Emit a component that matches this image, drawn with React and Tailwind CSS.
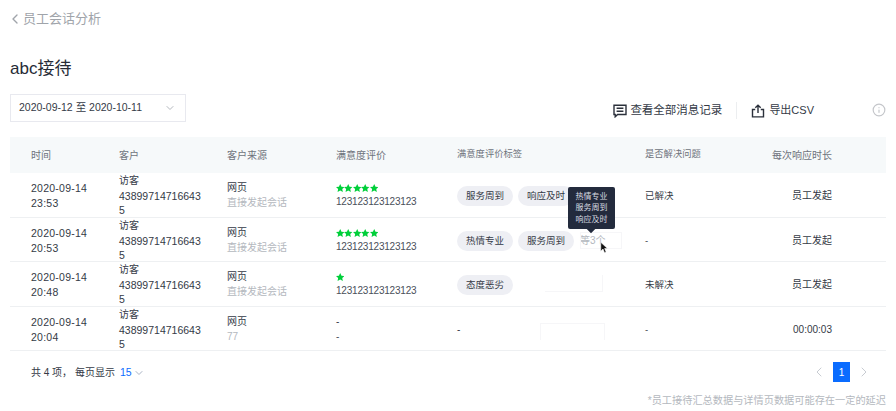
import React from "react";
import { ChevronLeft, ChevronRight, ChevronDown, Info } from "lucide-react";

const cols = "grid grid-cols-[88px_108px_109px_121px_188px_187px_53px] pl-[21px]";

const rows = [
  { date: "2020-09-14", time: "23:53", sub: "直接发起会话", stars: 5, note: "123123123123123", tags: ["服务周到", "响应及时"], solved: "已解决", resp: "员工发起", h: "h-[45px]" },
  { date: "2020-09-14", time: "20:53", sub: "直接发起会话", stars: 5, note: "123123123123123", tags: ["热情专业", "服务周到"], more: true, solved: "-", resp: "员工发起", h: "h-[44px]" },
  { date: "2020-09-14", time: "20:48", sub: "直接发起会话", stars: 1, note: "123123123123123", tags: ["态度恶劣"], solved: "未解决", resp: "员工发起", h: "h-[45px]" },
  { date: "2020-09-14", time: "20:04", sub: "77", stars: 0, note: "-", tags: [], solved: "-", resp: "00:00:03", h: "h-[44px]" },
];

function Star() {
  return (
    <svg viewBox="0 0 24 24" className="w-[8.4px] h-[8.4px] fill-[#00cf3a]">
      <path d="M12 0l3.7 7.6 8.3 1.1-6.1 5.8 1.6 8.3-7.5-4-7.5 4 1.6-8.3L0 8.7l8.3-1.1z" />
    </svg>
  );
}

function Row({ r }) {
  return (
    <div className={`${cols} ${r.h} pt-[1px] items-center border-b border-[#eef0f2] text-[10px] leading-[14.5px] text-[#343a46]`}>
      <div className="text-[10.5px] tracking-[0.25px] leading-[15px]">
        <div>{r.date}</div>
        <div>{r.time}</div>
      </div>
      <div>
        <div>访客</div>
        <div className="text-[10.5px]">43899714716643</div>
        <div className="text-[10.5px]">5</div>
      </div>
      <div>
        <div>网页</div>
        <div className="text-[#b4b8be]">{r.sub}</div>
      </div>
      <div>
        {r.stars > 0 ? (
          <div className="flex h-[13px] items-center">
            {Array.from({ length: r.stars }).map((_, i) => (
              <Star key={i} />
            ))}
          </div>
        ) : (
          <div>-</div>
        )}
        <div className="text-[#4a4f5a] tracking-[-0.2px]">{r.note}</div>
      </div>
      <div className="flex items-center gap-[5px]">
        {r.tags.length === 0 && <span>-</span>}
        {r.tags.map((t) => (
          <span key={t} className="h-[20px] w-[56px] rounded-full bg-[#eeeff4] flex items-center justify-center text-[9.5px]">
            {t}
          </span>
        ))}
        {r.more && <span className="ml-[1px] text-[#b4b8be]">等3个</span>}
      </div>
      <div className="flex">
        <div className="w-[127px] text-[9.5px]">{r.solved}</div>
        <div className="w-[60px] text-right">{r.resp}</div>
      </div>
    </div>
  );
}

export default function App() {
  return (
    <div className="relative w-[896px] h-[411px] overflow-hidden bg-white px-[10px] font-['Liberation_Sans','Noto_Sans_CJK_SC',sans-serif]">
      <div className="flex items-center h-[38px] text-[13px] text-[#a0a4aa]">
        <ChevronLeft size={16} strokeWidth={2} className="-ml-[3px]" />
        <span>员工会话分析</span>
      </div>

      <h1 className="mt-[20px] h-[22px] text-[17px] leading-[22px] font-normal text-[#262b36]">abc接待</h1>

      <div className="mt-[14px] flex items-start justify-between">
        <div className="flex h-[28px] w-[176px] items-center justify-between border border-[#e8e9ef] pl-[8px] pr-[9px] text-[10.5px] text-[#343a46]">
          <span>2020-09-12 至 2020-10-11</span>
          <ChevronDown size={12} className="text-[#b4b8be]" />
        </div>
        <div className="flex items-center pt-[8px] text-[11.5px] text-[#343a46]">
          <svg viewBox="0 0 14 14" className="mr-[3.5px] h-[14px] w-[14px] fill-none stroke-[#2b303b] stroke-[1.4]">
            <path d="M1 1.2h12v9.3H4.6L2.2 12.8v-2.3H1z" />
            <path d="M3.6 4.3h6.8M3.6 7.2h6.8" />
          </svg>
          <span>查看全部消息记录</span>
          <span className="mx-[14px] h-[17px] w-px bg-[#eceef0]" />
          <svg viewBox="0 0 14 14" className="mr-[4px] h-[14px] w-[14px] fill-none stroke-[#2b303b] stroke-[1.4]">
            <path d="M4.2 5.5H1.5v7.4h11V5.5H9.8" />
            <path d="M7 9V1.2M4.3 3.8L7 1.2l2.7 2.6" />
          </svg>
          <span className="text-[11px]">导出CSV</span>
          <Info size={14} className="ml-[58px] text-[#c4c6ca] -mt-[2px]" />
        </div>
      </div>

      <div className={`${cols} mt-[15px] h-[36px] items-center bg-[#f6f9fa] text-[10px] text-[#6e737c] whitespace-nowrap`}>
        <div>时间</div>
        <div>客户</div>
        <div>客户来源</div>
        <div>满意度评价</div>
        <div className="text-[9.3px]">满意度评价标签</div>
        <div className="flex">
          <div className="w-[127px] text-[9.3px]">是否解决问题</div>
          <div>每次响应时长</div>
        </div>
      </div>

      {rows.map((r, i) => (
        <Row key={i} r={r} />
      ))}

      <div className="flex items-center justify-between pl-[21px] h-[42px] text-[10px] text-[#343a46]">
        <div className="flex items-center pt-[1px]">
          <span className="whitespace-pre">共 4 项， 每页显示</span>
          <span className="ml-[5px] text-[10.5px] text-[#0a6cff]">15</span>
          <ChevronDown size={12} className="text-[#a9b3c4] ml-[1px]" />
        </div>
        <div className="flex items-center gap-[6px] pr-[14px]">
          <ChevronLeft size={16} strokeWidth={1.5} className="text-[#c8ccd2]" />
          <span className="flex h-[20px] w-[17px] items-center justify-center bg-[#0a6cff] text-white">1</span>
          <ChevronRight size={16} strokeWidth={1.5} className="text-[#c8ccd2]" />
        </div>
      </div>

      <div className="mt-[1px] text-right text-[10.2px] leading-[14px] text-[#b4b8be]">*员工接待汇总数据与详情页数据可能存在一定的延迟</div>

      {/* faint outlines left over in the capture */}
      <div className="absolute left-[580px] top-[232px] h-[17px] w-[42px] border border-[#f6f6f8]" />
      <div className="absolute left-[545px] top-[275px] h-[17px] w-[58px] border-r border-b border-[#f6f6f8]" />
      <div className="absolute left-[540px] top-[323px] h-[17px] w-[65px] border-x border-t border-[#f6f6f8]" />

      {/* tooltip over the tag column */}
      <div className="absolute left-[568px] top-[187px] w-[47px] h-[42px] rounded-[2px] bg-[#232b3d] py-[3.5px] text-center text-[8px] leading-[11.7px] text-[#d7dae0]">
        <div>热情专业</div>
        <div>服务周到</div>
        <div>响应及时</div>
        <div className="absolute left-[20px] -bottom-[3px] h-[6px] w-[6px] rotate-45 bg-[#232b3d]" />
      </div>
      <svg viewBox="0 0 12 16" className="absolute left-[600px] top-[241px] w-[9px] h-[13px]">
        <path d="M1 1v12l3-3 2 5 2.2-1-2-4.6H10z" fill="#111" stroke="#fff" strokeWidth="0.8" />
      </svg>
    </div>
  );
}
